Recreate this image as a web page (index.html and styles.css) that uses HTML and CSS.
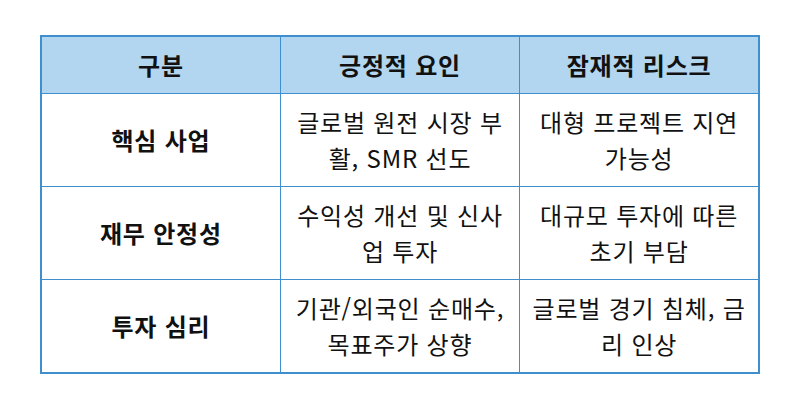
FILE: index.html
```html
<!DOCTYPE html>
<html lang="ko">
<head>
<meta charset="utf-8">
<link rel="stylesheet" href="styles.css">
</head>
<body>
<table class="risk-table">
  <thead>
    <tr>
      <th>구분</th>
      <th>긍정적 요인</th>
      <th>잠재적 리스크</th>
    </tr>
  </thead>
  <tbody>
    <tr>
      <td class="label">핵심 사업</td>
      <td>글로벌 원전 시장 부활, SMR 선도</td>
      <td>대형 프로젝트 지연 가능성</td>
    </tr>
    <tr>
      <td class="label">재무 안정성</td>
      <td>수익성 개선 및 신사업 투자</td>
      <td>대규모 투자에 따른 초기 부담</td>
    </tr>
    <tr>
      <td class="label">투자 심리</td>
      <td>기관/외국인 순매수, 목표주가 상향</td>
      <td>글로벌 경기 침체, 금리 인상</td>
    </tr>
  </tbody>
</table>
</body>
</html>
```
FILE: styles.css
```css
html, body {
  margin: 0;
  background: #ffffff;
}
body {
  padding: 35px 40px;
  font-family: "Noto Sans CJK KR", "Noto Sans", sans-serif;
  color: #111111;
}
.risk-table {
  width: 720px;
  border-collapse: collapse;
  border: 2px solid #3f8fcf;
  table-layout: fixed;
  font-size: 24px;
  letter-spacing: 0.8px;
}
.risk-table th,
.risk-table td {
  border: 1px solid #3f8fcf;
  text-align: center;
  vertical-align: middle;
  padding: 10px 12px;
  line-height: 36px;
}
.risk-table th {
  background: #b2d5f0;
  font-weight: 700;
  height: 36px;
}
.risk-table td {
  height: 72px;
  font-weight: 400;
}
.risk-table td.label {
  font-weight: 700;
}
```
